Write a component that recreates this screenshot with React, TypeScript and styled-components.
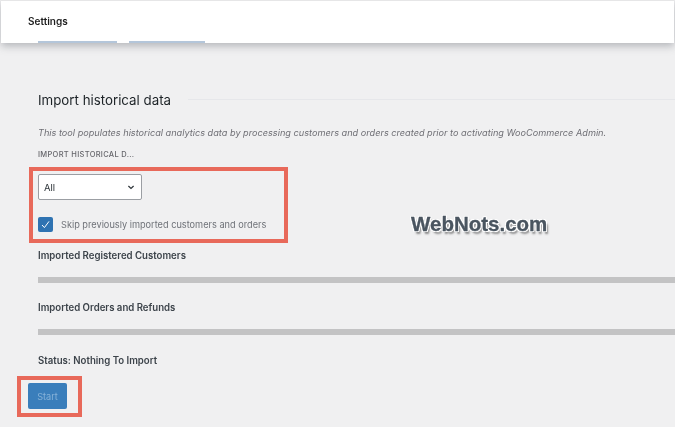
import React from "react";
import styled, { createGlobalStyle } from "styled-components";

const Global = createGlobalStyle`
  html, body { margin: 0; padding: 0; background: #f0f0f1; }
  body { font-family: Inter, "Liberation Sans", sans-serif; }
`;

const Page = styled.div`
  position: relative;
  width: 675px;
  height: 427px;
  overflow: hidden;
  background: #f0f0f1;
  display: flex;
  flex-direction: column;
`;

const Header = styled.header`
  box-sizing: border-box;
  height: 43px;
  margin: 0 1px 0 1px;
  border-top: 1px solid #e6e6e7;
  background: #fff;
  display: flex;
  align-items: center;
  padding: 0 0 3px 27px;
  font-size: 10px;
  font-weight: 600;
  color: #1e1e1e;
  box-shadow: 0 3px 8px rgba(70, 75, 85, 0.36);
  position: relative;
  z-index: 1;
  filter: blur(0.25px);
`;

const Peek = styled.div`
  position: absolute;
  top: 41px;
  left: 38px;
  display: flex;
  gap: 12px;
  z-index: 2;
`;

const PeekEdge = styled.span<{ $w: number }>`
  display: block;
  width: ${(p) => p.$w}px;
  height: 2px;
  background: #b4c6da;
`;

const Main = styled.main`
  flex: 1;
  padding: 49px 0 0 38px;
  display: flex;
  flex-direction: column;
  align-items: flex-start;
  filter: blur(0.3px);
`;

const TitleRow = styled.div`
  align-self: stretch;
  display: flex;
  align-items: center;
  gap: 17px;
  height: 17px;
`;

const Title = styled.h2`
  margin: 0;
  font-size: 13.3px;
  line-height: 17px;
  font-weight: 400;
  color: #1d2327;
  white-space: nowrap;
`;

const TitleRule = styled.div`
  flex: 1;
  height: 1px;
  margin-top: -3px;
  background: #e6e7ea;
`;

const Description = styled.p`
  margin: 18px 0 0;
  font-size: 9.16px;
  line-height: 12px;
  font-style: italic;
  color: #6f6f75;
  white-space: nowrap;
`;

const FieldLabel = styled.div`
  margin-top: 11px;
  font-size: 7.5px;
  line-height: 10px;
  font-weight: 500;
  letter-spacing: 0.3px;
  color: #66666b;
`;

const Highlight = styled.section`
  box-sizing: border-box;
  width: 259px;
  height: 76px;
  margin: 7px 0 0 -9px;
  padding: 3px 0 0 5px;
  border: 4px solid #e8695a;
`;

const SelectBox = styled.div`
  box-sizing: border-box;
  width: 104px;
  height: 26px;
  background: #fff;
  border: 1px solid #9b9ea3;
  border-radius: 2px;
  display: flex;
  align-items: center;
  justify-content: space-between;
  padding: 0 5px 0 5px;
  font-size: 9.5px;
  color: #2c3338;
`;

const CheckRow = styled.div`
  display: flex;
  align-items: center;
  gap: 8px;
  margin-top: 17px;
  font-size: 9.2px;
  color: #6f7278;
`;

const CheckBox = styled.span`
  box-sizing: border-box;
  width: 15px;
  height: 15px;
  border-radius: 2px;
  background: #2f73b2;
  display: flex;
  align-items: center;
  justify-content: center;
`;

const Section = styled.div<{ $top: number }>`
  margin-top: ${(p) => p.$top}px;
  font-size: 9.65px;
  line-height: 12px;
  font-weight: 600;
  color: #3c434a;
  white-space: nowrap;
`;

const Bar = styled.div`
  align-self: stretch;
  height: 6px;
  margin-top: 15px;
  background: #c3c3c4;
`;

const ButtonFrame = styled.div`
  box-sizing: border-box;
  width: 65px;
  height: 41px;
  margin: 9px 0 0 -21px;
  border: 4px solid #e8695a;
  padding: 3px 0 0 7px;
`;

const StartButton = styled.div`
  box-sizing: border-box;
  width: 39px;
  height: 26px;
  background: #3a7ebb;
  border-radius: 2px;
  display: flex;
  align-items: center;
  justify-content: center;
  font-size: 9.2px;
  color: #86b2d8;
`;

const Watermark = styled.div`
  position: absolute;
  left: 411px;
  top: 212px;
  font-family: "Liberation Sans", Arial, sans-serif;
  font-size: 20.5px;
  line-height: 24px;
  font-weight: 700;
  color: #4a5560;
  white-space: nowrap;
  -webkit-text-stroke: 0.3px #4a5560;
  filter: blur(0.3px);
  text-shadow:
    1px 0 0 #fff, -1px 0 0 #fff, 0 1px 0 #fff, 0 -1px 0 #fff,
    1px 1px 0 #fff, -1px 1px 0 #fff, 1px -1px 0 #fff, -1px -1px 0 #fff,
    2px 3px 2px rgba(40, 40, 40, 0.5);
`;

export default function App() {
  return (
    <Page>
      <Global />
      <Header>Settings</Header>
      <Peek>
        <PeekEdge $w={79} />
        <PeekEdge $w={76} />
      </Peek>
      <Main>
        <TitleRow>
          <Title>Import historical data</Title>
          <TitleRule />
        </TitleRow>
        <Description>
          This tool populates historical analytics data by processing customers and orders created prior to activating WooCommerce Admin.
        </Description>
        <FieldLabel>IMPORT HISTORICAL D...</FieldLabel>
        <Highlight>
          <SelectBox>
            All
            <svg width="10" height="10" viewBox="0 0 10 10" fill="none" stroke="#2c3338" strokeWidth="1.2">
              <path d="M2.4 4 5 6.4 7.6 4" />
            </svg>
          </SelectBox>
          <CheckRow>
            <CheckBox>
              <svg width="11" height="11" viewBox="0 0 11 11" fill="none" stroke="#fff" strokeWidth="1">
                <path d="M2 6 4.4 8.6 9 2.4" />
              </svg>
            </CheckBox>
            Skip previously imported customers and orders
          </CheckRow>
        </Highlight>
        <Section $top={7}>Imported Registered Customers</Section>
        <Bar />
        <Section $top={19}>Imported Orders and Refunds</Section>
        <Bar />
        <Section $top={20}>Status: Nothing To Import</Section>
        <ButtonFrame>
          <StartButton>Start</StartButton>
        </ButtonFrame>
      </Main>
      <Watermark>WebNots.com</Watermark>
    </Page>
  );
}
